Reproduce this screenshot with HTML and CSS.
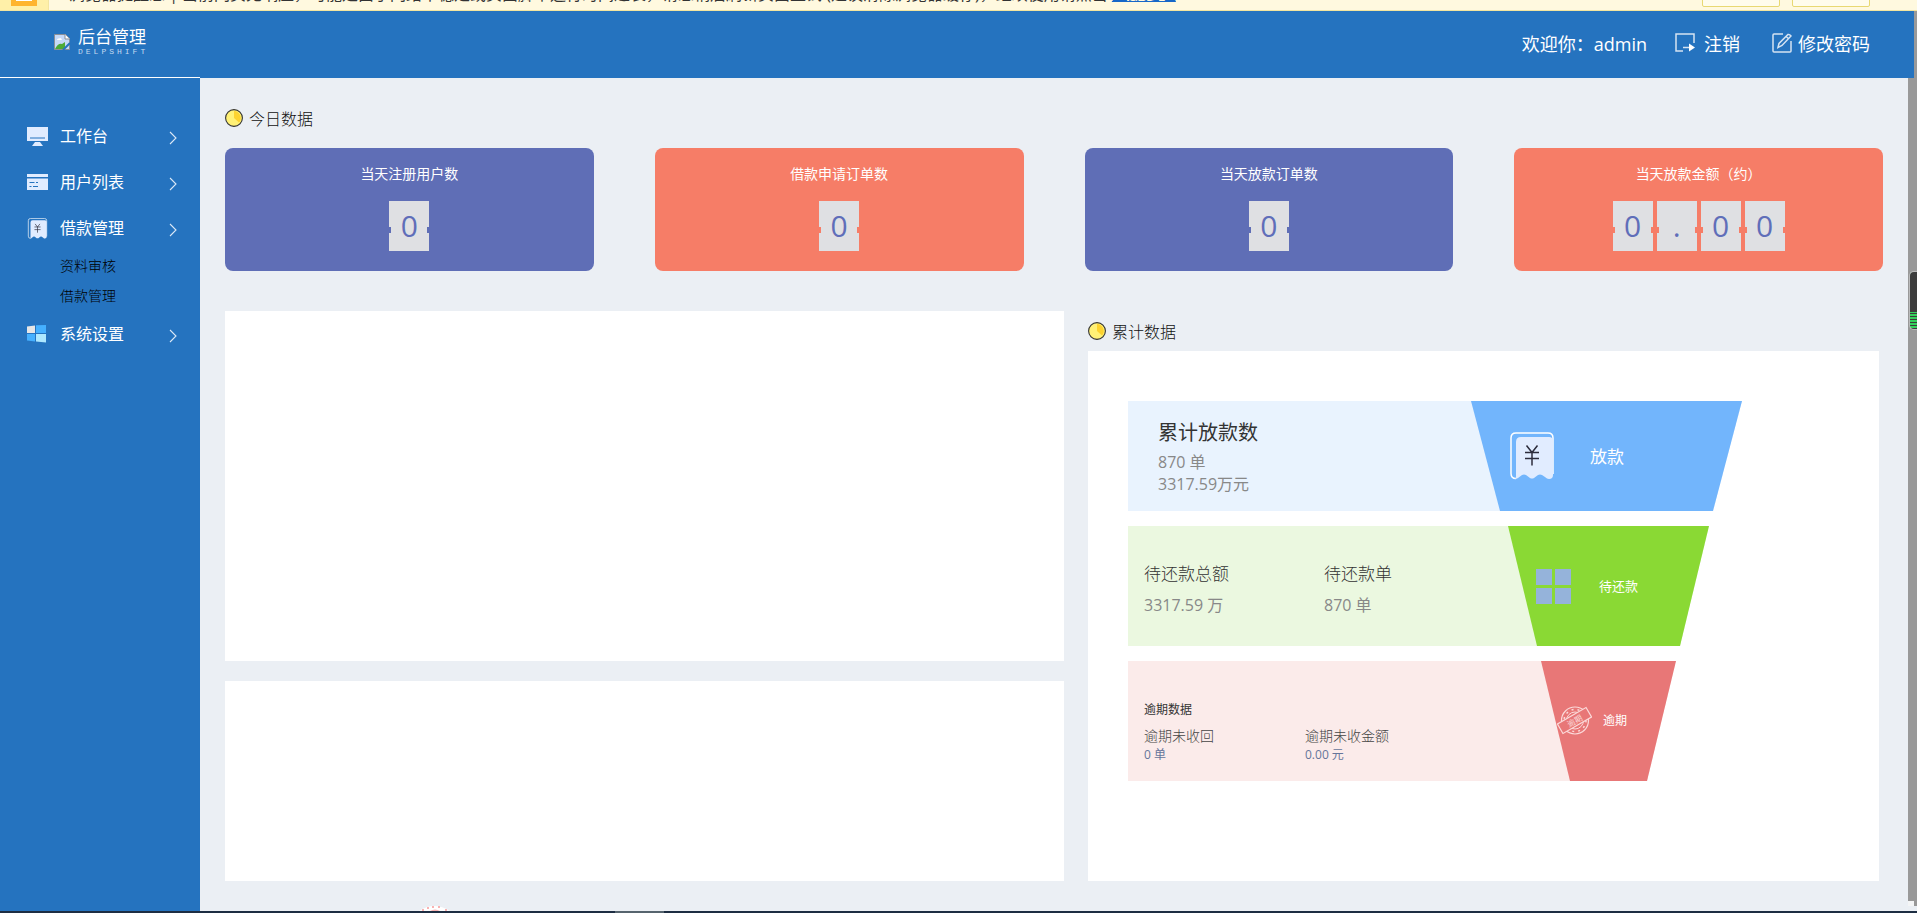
FILE: index.html
```html
<!DOCTYPE html>
<html lang="zh-CN">
<head>
<meta charset="utf-8">
<title>后台管理</title>
<link rel="stylesheet" href="styles.css">
</head>
<body>
<svg class="defs" aria-hidden="true">
  <symbol id="pie" viewBox="0 0 18 18">
    <circle cx="9" cy="9" r="8.4" fill="#fff176" stroke="#333" stroke-width="1.1"/>
    <path d="M9 9V2a7 7 0 0 1 5 11.6z" fill="#fdd32f"/>
  </symbol>
  <symbol id="chevron" viewBox="0 0 8 14">
    <path d="M1 1l6 6-6 6" fill="none" stroke="#dce9f7" stroke-width="1.1"/>
  </symbol>
  <symbol id="receipt" viewBox="0 0 44 48">
    <path d="M6 46.500q-5 0-5-5V6q0-5 5-5h32q5 0 5 5v36" fill="none" stroke="#fff" stroke-width="1.500"/>
    <path d="M6 46V10q0-5 5-5h28q4 0 4 4v34q0 4-4 4-2 0-4-2l-3-2q-2-1-4 0l-4 3q-2 1-4 0l-4-3q-2-1-4 0l-4 3q-1 1-4 1z" fill="#e1ecff"/>
    <path d="M16.500 13.500l5.500 7 5.500-7M22 20.500V33.500M15 20.500h14M15 26.500h14" fill="none" stroke="#2c2c3c" stroke-width="1.500"/>
  </symbol>
</svg>

<div class="notice">
  <div class="notice-mark"><span class="notice-icon"></span></div>
  <p class="notice-text">浏览器提醒您 | 当前网页无响应，可能是由于网络不稳定或页面脚本运行时间过长，请您稍后刷新页面重试 (建议清除浏览器缓存)，继续使用请点击 <a href="#">立即处理</a></p>
  <div class="notice-actions">
    <button type="button">不再提示</button>
    <button type="button">关闭</button>
  </div>
</div>

<header class="header">
  <div class="brand">
    <svg class="brand-img" viewBox="0 0 16 16" aria-hidden="true">
      <path d="M.5.5h11l4 4v11H.5z" fill="#c6d9f7" stroke="#8b8f96"/>
      <path d="M11 .5v4.500h4.500" fill="#fff" stroke="#8b8f96"/>
      <path d="M3 6q0-2 2-1.500Q7 3 8 6z" fill="#fff"/>
      <path d="M1 15q3-6 7-5l3-2v7z" fill="#4caa36"/>
      <path d="M9 16l7-7" stroke="#2573bf" stroke-width="2"/>
    </svg>
    <div class="brand-text">
      <strong>后台管理</strong>
      <small>DELPSHIFT</small>
    </div>
  </div>
  <nav class="account">
    <span>欢迎你：admin</span>
    <a class="logout" href="#">
      <svg viewBox="0 0 20 20" aria-hidden="true"><path d="M19 10V1H1v17h7" fill="none" stroke="#d5e3f2" stroke-width="1.500"/><path d="M8 14.500h7" stroke="#d5e3f2" stroke-width="1.500"/><path d="M14 10.500l6 4-6 4z" fill="#fff"/></svg>
      注销
    </a>
    <a class="password" href="#">
      <svg viewBox="0 0 20 20" aria-hidden="true"><path d="M11 1H2Q1 1 1 2v16q0 1 1 1h16q1 0 1-1V8" fill="none" stroke="#d5e3f2" stroke-width="1.500"/><path d="M6 14.500l1-4L16 1.500q1.500-.5 3 1.500L10 12.500zM14 3.500l3 2.500" fill="none" stroke="#d5e3f2" stroke-width="1.500"/></svg>
      修改密码
    </a>
  </nav>
</header>

<div class="body">
  <nav class="sidebar">
    <a class="item" href="#">
      <svg class="item-icon" viewBox="0 0 21 21" aria-hidden="true"><path d="M0 1h21v14H0z" fill="#e1ecff"/><path d="M3 12h15" stroke="#2573bf"/><path d="M8 16h5l3 4H5z" fill="#e1ecff"/></svg>
      <span>工作台</span><svg class="arrow"><use href="#chevron"/></svg>
    </a>
    <a class="item" href="#">
      <svg class="item-icon" viewBox="0 0 21 21" aria-hidden="true"><path d="M0 2h21v3H0zM0 6.500h21V18H0z" fill="#e1ecff"/><path d="M2.500 10.500h5M9 10.500h2M2.500 14.500h2M6 14.500h5" stroke="#2573bf"/></svg>
      <span>用户列表</span><svg class="arrow"><use href="#chevron"/></svg>
    </a>
    <a class="item" href="#">
      <svg class="item-icon" aria-hidden="true"><use href="#receipt"/></svg>
      <span>借款管理</span><svg class="arrow"><use href="#chevron"/></svg>
    </a>
    <a class="subitem" href="#">资料审核</a>
    <a class="subitem" href="#">借款管理</a>
    <a class="item" href="#">
      <svg class="item-icon" viewBox="0 0 21 21" aria-hidden="true"><path d="M0 2.500l8-1V9H0z" fill="#e6e6e6"/><path d="M9 1.300L19 1v8H9zM0 10h8v7.500l-8-1z" fill="#45b0ff"/><path d="M9 10h10v8.500l-10-1z" fill="#aee8ff"/></svg>
      <span>系统设置</span><svg class="arrow"><use href="#chevron"/></svg>
    </a>
  </nav>

  <main class="main">
    <h2 class="heading"><svg><use href="#pie"/></svg>今日数据</h2>
    <section class="cards">
      <article class="card purple"><h3>当天注册用户数</h3><div class="digits"><span>0</span></div></article>
      <article class="card coral"><h3>借款申请订单数</h3><div class="digits"><span>0</span></div></article>
      <article class="card purple"><h3>当天放款订单数</h3><div class="digits"><span>0</span></div></article>
      <article class="card coral"><h3>当天放款金额（约）</h3><div class="digits"><span>0</span><span>.</span><span>0</span><span>0</span></div></article>
    </section>

    <div class="panels">
      <div class="charts">
        <section class="panel chart-large"></section>
        <section class="panel chart-small"></section>
      </div>
      <div class="totals">
        <h2 class="heading"><svg><use href="#pie"/></svg>累计数据</h2>
        <section class="panel funnel">
          <div class="stage lent">
            <div class="info">
              <h3>累计放款数</h3>
              <p>870 单</p>
              <p>3317.59万元</p>
            </div>
            <div class="shape">
              <svg aria-hidden="true"><use href="#receipt"/></svg>
              <span>放款</span>
            </div>
          </div>
          <div class="stage due">
            <div class="info">
              <dl><dt>待还款总额</dt><dd>3317.59 万</dd></dl>
              <dl><dt>待还款单</dt><dd>870 单</dd></dl>
            </div>
            <div class="shape">
              <svg viewBox="0 0 35 35" aria-hidden="true"><path d="M0 0h16v16H0zM19 0h16v16H19zM0 19h16v16H0zM19 19h16v16H19z" fill="#95b3da"/></svg>
              <span>待还款</span>
            </div>
          </div>
          <div class="stage overdue">
            <div class="info">
              <h3>逾期数据</h3>
              <dl><dt>逾期未收回</dt><dd>0 单</dd></dl>
              <dl><dt>逾期未收金额</dt><dd>0.00 元</dd></dl>
            </div>
            <div class="shape">
              <svg viewBox="0 0 35 30" aria-hidden="true">
                <g fill="none" stroke="#fbd9d9">
                  <circle cx="18" cy="14.500" r="13.500" stroke-width="1.200"/>
                  <circle cx="18" cy="14.500" r="8.500" stroke-width="1"/>
                  <circle cx="18" cy="14.500" r="11" stroke-width="1.500" stroke-dasharray="2 4"/>
                </g>
                <g transform="rotate(-30 17.500 14.500)">
                  <rect x="1" y="9" width="33" height="11" fill="#e87777" stroke="#fbd9d9" stroke-width="1.200"/>
                  <text x="17.500" y="18" text-anchor="middle" class="stamp">逾期</text>
                </g>
              </svg>
              <span>逾期</span>
            </div>
          </div>
        </section>
      </div>
    </div>
    <svg class="spark" viewBox="0 0 31 5" aria-hidden="true"><path d="M0 5Q15-5 31 5z" fill="#fff"/><path d="M11 5q5-3 10 0zM3 3h2v2H3zM8 1h2v2H8zM13 0h2v2h-2zM19 0h2v2h-2zM26 3h2v2h-2z" fill="#f9b3b3"/></svg>
  </main>
  <div class="scrollbar"></div>
</div>
<div class="meter"></div>
<footer class="taskbar"></footer>
</body>
</html>
```
FILE: styles.css
```css
* { box-sizing: border-box; }

body {
  margin: 0;
  min-height: 100vh;
  display: flex;
  flex-direction: column;
  position: relative;
  overflow: hidden;
  background: #ebeff4;
  color: #333;
  font-family: "Open Sans", "Noto Sans CJK SC", sans-serif;
  font-size: 16px;
}

h2, h3, p, dl, dd { margin: 0; font-weight: 400; }
a { color: inherit; text-decoration: none; }
svg { display: block; flex: none; }
.defs { position: absolute; width: 0; height: 0; }

.notice {
  height: 11px;
  display: flex;
  align-items: flex-end;
  overflow: hidden;
  background: #fff9df;
  border-bottom: 1px solid #f3e5a0;
}
.notice-mark {
  width: 49px;
  height: 40px;
  padding: 0 11px 4px;
  display: flex;
  align-items: flex-end;
  background: #fff0a8;
  border-right: 1px solid #f3e5a0;
}
.notice-icon {
  width: 26px;
  height: 26px;
  border: 5px solid #ffb52e;
  background: #fff;
}
.notice-text {
  flex: 1;
  padding: 0 0 6px 20px;
  line-height: 20px;
  white-space: nowrap;
}
.notice-text a { color: #1767c8; text-decoration: underline; }
.notice-actions { display: flex; gap: 12px; padding: 0 47px 3px 0; }
.notice-actions button {
  width: 78px;
  height: 28px;
  padding: 0 0 2px;
  background: #fffcec;
  border: 1px solid #e8d873;
  border-radius: 2px;
  color: #5c4a1e;
  font: 14px "Noto Sans CJK SC", sans-serif;
}

.header {
  height: 67px;
  padding: 0 44px 3px 54px;
  display: flex;
  justify-content: space-between;
  align-items: center;
  background: #2573bf;
  border-right: 3px solid #999;
  color: #fff;
}
.brand { display: flex; align-items: center; gap: 8px; padding-bottom: 3px; }
.brand-img { width: 16px; height: 16px; }
.brand-text { display: flex; flex-direction: column; }
.brand strong { font-size: 17px; line-height: 20px; font-weight: 400; }
.brand small { color: #c4daf0; font: 8px/10px "Liberation Mono", monospace; letter-spacing: 3px; }
.account { display: flex; align-items: center; font-size: 18px; }
.account a { display: flex; align-items: center; }
.account svg { width: 20px; height: 20px; }
.logout { margin-left: 28px; gap: 9px; }
.password { margin-left: 32px; gap: 6px; }

.body { flex: 1; display: flex; }

.sidebar {
  width: 200px;
  margin-top: -1px;
  padding-top: 35px;
  border-top: 1px solid #fff;
  background: #2573bf;
  color: #fff;
}
.item {
  height: 46px;
  padding: 0 23px 0 27px;
  display: flex;
  align-items: center;
  gap: 12px;
}
.item span { flex: 1; padding-bottom: 2px; }
.item-icon { width: 21px; height: 21px; }
.arrow { width: 8px; height: 14px; margin-top: 4px; }
.subitem {
  display: block;
  height: 30px;
  padding-left: 60px;
  color: #000;
  font-size: 14px;
  font-weight: 300;
  line-height: 30px;
}

.main { flex: 1; position: relative; padding: 20px 25px 30px; }
.heading {
  height: 40px;
  display: flex;
  align-items: center;
  gap: 6px;
  color: #111;
  font-size: 16px;
  font-weight: 300;
}
.heading svg { width: 18px; height: 18px; }

.cards {
  margin: 10px 0 40px;
  display: grid;
  grid-template-columns: repeat(4, 1fr);
  gap: 61px;
}
.card {
  padding: 16px 0 20px;
  border-radius: 8px;
  background: var(--tone);
  color: #fff;
  text-align: center;
}
.purple { --tone: #5f6eb6; }
.coral { --tone: #f67d67; }
.card h3 { font-size: 14px; line-height: 20px; }
.digits { margin-top: 17px; display: flex; justify-content: center; gap: 4px; }
.digits span {
  position: relative;
  width: 40px;
  height: 50px;
  background: #dfe0e3;
  color: #5f6eb9;
  font-size: 30px;
  line-height: 50px;
}
.digits span::before, .digits span::after {
  content: "";
  position: absolute;
  top: 26px;
  width: 2px;
  height: 6px;
  background: var(--tone);
}
.digits span::before { left: 0; }
.digits span::after { right: 0; }

.panels {
  padding-right: 4px;
  display: grid;
  grid-template-columns: 839fr 791fr;
  gap: 24px;
}
.panel { background: #fff; }
.charts { display: flex; flex-direction: column; gap: 20px; }
.chart-large { flex: 7; }
.chart-small { flex: 4; }

.funnel { padding: 50px 40px 100px; display: flex; flex-direction: column; gap: 15px; }
.stage { display: flex; height: 120px; clip-path: polygon(0 0, 100% 0, calc(100% - 29px) 100%, 0 100%); }
.info { flex: 1; }
.info p, .info dd { color: #888; }
.shape {
  display: flex;
  align-items: center;
  color: #fff;
  clip-path: polygon(0 0, 100% 0, 100% 100%, 29px 100%);
}
.shape span { padding-bottom: 2px; }

.lent { height: 110px; margin-right: 97px; background: #e9f3fe; }
.lent .info { padding: 18px 0 0 30px; }
.lent h3 { margin-bottom: 4px; font-size: 20px; line-height: 28px; }
.lent p { line-height: 22px; }
.lent .shape { width: 271px; padding-left: 39px; gap: 36px; background: #72b5fc; font-size: 17px; }
.lent svg { width: 44px; height: 48px; }

.due { margin-right: 130px; background: #ebf8e0; }
.due .info { display: flex; padding: 36px 0 0 16px; }
.due dl { width: 180px; }
.due dt { margin-bottom: 7px; color: #333; font-size: 17px; font-weight: 300; line-height: 24px; }
.due dd { line-height: 24px; }
.due .shape { width: 201px; padding-left: 28px; gap: 28px; background: #8ad934; font-size: 13px; }
.due svg { width: 35px; height: 35px; }

.overdue { margin-right: 163px; background: #fbebea; }
.overdue .info { display: flex; flex-wrap: wrap; align-content: flex-start; padding: 39px 0 0 16px; }
.overdue h3 { width: 100%; margin-bottom: 6px; font-size: 12px; line-height: 20px; }
.overdue dl { width: 161px; }
.overdue dt { color: #444; font-size: 14px; font-weight: 300; line-height: 20px; }
.overdue dd { color: #66759a; font-size: 12px; line-height: 17px; }
.overdue .shape { width: 135px; padding-left: 16px; gap: 11px; background: #e87777; font-size: 12px; }
.overdue svg { width: 35px; height: 30px; }
.stamp { fill: #fbd9d9; font-size: 8px; }

.spark { position: absolute; left: 219px; bottom: 0; width: 31px; height: 5px; }

.scrollbar {
  width: 9px;
  margin-bottom: 5px;
  background: linear-gradient(#f4f5f6, #f4f5f6) left bottom / 6px 5px no-repeat #999;
}
.meter {
  position: absolute;
  top: 271px;
  right: 0;
  width: 8px;
  height: 59px;
  border: 1px solid #bbb;
  border-right: 0;
  border-radius: 5px 0 0 5px;
  background: linear-gradient(#3c3c3c 40px, transparent 40px), repeating-linear-gradient(#35d05c 0 2px, #3c3c3c 2px 3px);
}
.taskbar {
  height: 2px;
  background: linear-gradient(#56646e, #56646e) 615px 0 / 49px 2px no-repeat #1d2d42;
}
```
